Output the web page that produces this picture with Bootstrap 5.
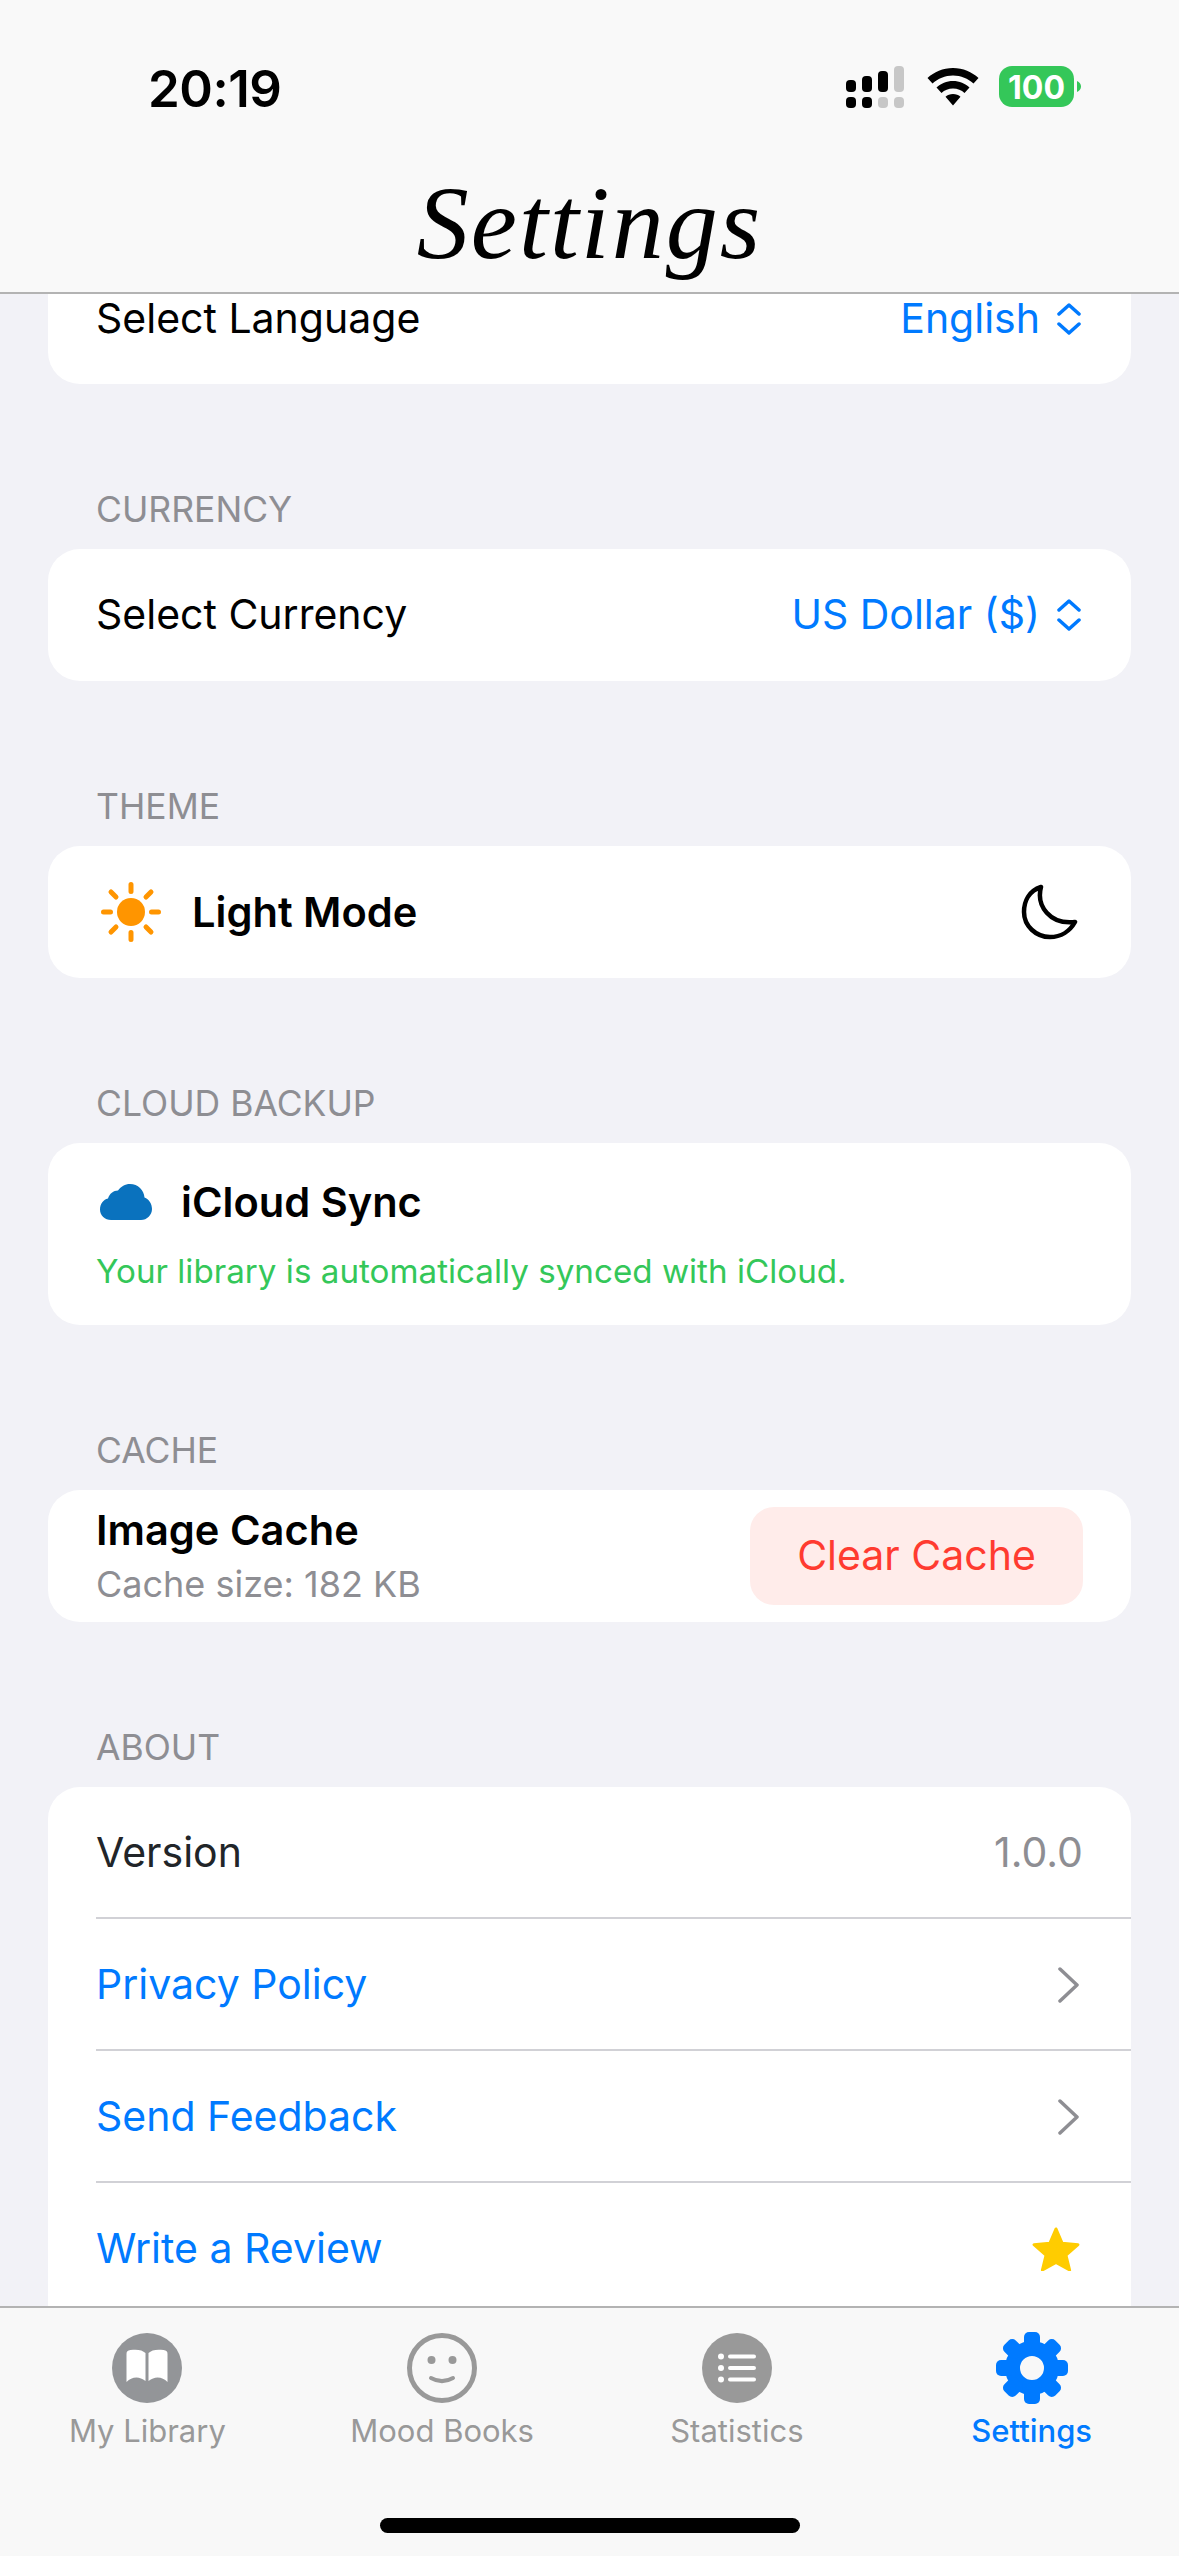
<!DOCTYPE html>
<html lang="en">
<head>
<meta charset="utf-8">
<title>Settings</title>
<link href="https://cdn.jsdelivr.net/npm/bootstrap@5.3.0/dist/css/bootstrap.min.css" rel="stylesheet">
<style>
html,body{height:100%;}
body{font-family:Inter,"Liberation Sans",sans-serif;background:#f2f2f7;color:#000;font-size:41px;overflow:hidden;}
.phone{height:2556px;}
.top-bar{height:294px;background:#f9f9f9;border-bottom:2px solid #b3b3b3;}
.status-row{height:174px;padding:0 98px 0 148px;}
.clock{font-size:51px;font-weight:600;line-height:1;padding-top:2px;letter-spacing:-.5px;}
.page-title{font-family:"Liberation Serif",serif;font-style:italic;font-size:104px;line-height:1;margin:-3px 0 0;letter-spacing:2px;}
.scroll-area{min-height:0;}
.scroll-inner{margin-top:-42px;padding:0 48px;}
.sheet{border-radius:32px;background:#fff;overflow:hidden;border:0;}
.sect-label{height:40px;line-height:40px;margin:105px 0 20px 48px;font-size:35.5px;color:#8e8e93;padding-top:1px;}
.line{height:132px;padding:0 48px;background:#fff;}
.first-line{line-height:1;padding-top:1px;}
.blue{color:#007aff;}
.muted-val{color:#8e8e93;}
.picker{gap:16px;}
.picker svg{margin-right:1px;}
.strong-txt{font-weight:600;font-size:41.6px;}
.theme-name{margin-left:31px;}
.sun{width:60px;height:60px;margin-left:5px;}
.moon{margin-right:5px;}
.cloud-box{height:182px;padding:28px 48px 0;}
.cloud-icon{margin-left:4px;}
.cloud-name{margin-left:29px;}
.sync-note{font-size:33.2px;color:#34c759;margin-top:18px;line-height:40px;}
.cache-name{line-height:48px;}
.cache-size{font-size:36px;color:#8e8e93;line-height:40px;margin:10px 0 3px;}
.clear-btn{width:333px;height:98px;background:#ffecea;color:#ff3b30;border:0;border-radius:24px;font-size:41px;padding:0;}
.clear-btn:hover{background:#ffecea;color:#ff3b30;}
.about-list .list-group-item{height:132px;padding:0 48px;border:0;background:transparent;}
.about-list .rule{position:relative;}
.about-list .rule::after{content:"";position:absolute;left:48px;right:0;top:-2px;height:2px;background:#d1d1d6;}
.about-list svg{margin-right:3px;}
.about-sheet{padding-bottom:100px;}
.tab-bar{height:250px;background:#f8f8f8;border-top:2px solid #b3b3b3;flex:0 0 250px;}
.tab-item{width:25%;padding-top:20px;color:#999;font-size:31px;line-height:40px;}
.tab-item svg{display:block;width:80px;height:80px;margin-bottom:3px;}
.tab-item.on{color:#007aff;font-weight:500;}
.home-bar{width:420px;height:15px;background:#000;border-radius:8px;margin:0 auto;}
.tab-row{height:210px;}
.wifi-icon{margin-left:21px;}
.batt{margin-left:20px;}
</style>
</head>
<body>
<div class="phone d-flex flex-column">
  <header class="top-bar flex-shrink-0">
    <div class="status-row d-flex align-items-center justify-content-between">
      <div class="clock">20:19</div>
      <div class="d-flex align-items-center">
        <svg width="60" height="42" viewBox="0 0 60 42"><g fill="#000"><rect x="0" y="14" width="10" height="12" rx="4"/><rect x="16" y="10" width="10" height="16" rx="4"/><rect x="32" y="5" width="10" height="21" rx="4"/><rect x="0" y="31" width="10" height="11" rx="4"/><rect x="16" y="31" width="10" height="11" rx="4"/></g><g fill="#c7c7c7"><rect x="48" y="0" width="10" height="26" rx="4"/><rect x="32" y="31" width="10" height="11" rx="4"/><rect x="48" y="31" width="10" height="11" rx="4"/></g></svg>
        <svg class="wifi-icon" width="52" height="38" viewBox="0 0 52 38"><path fill="#000" d="M26 0c10 0 19 4 25.500 10l-5 5.500C41 10.500 34 7.500 26 7.500S11 10.500 5.500 15.500L.5 10C7 4 16 0 26 0zM26 13c6.500 0 12 2.500 16.500 6.500l-5 5.500c-3-3-7-4.500-11.500-4.500s-8.500 1.500-11.500 4.500l-5-5.500C14 15.500 19.500 13 26 13zM26 26c3 0 5.500 1 7.500 2.800L26 37.500l-7.500-8.700C20.500 27 23 26 26 26z"/></svg>
        <svg class="batt" width="82" height="42" viewBox="0 0 82 42"><rect width="75" height="41" rx="13" fill="#34c759"/><path d="M78 15c2.500 1 4 3 4 5.500s-1.500 4.500-4 5.500z" fill="#34c759"/><text x="37.500" y="32.500" text-anchor="middle" font-family="Inter,sans-serif" font-weight="700" font-size="32" fill="#fff">100</text></svg>
      </div>
    </div>
    <h1 class="page-title text-center">Settings</h1>
  </header>

  <main class="scroll-area flex-grow-1 overflow-hidden">
    <div class="scroll-inner">
      <div class="sheet line first-line d-flex align-items-center justify-content-between">
        <span>Select Language</span>
        <span class="blue picker d-flex align-items-center">English
          <svg width="26" height="32" viewBox="0 0 26 32" fill="none" stroke="#007aff" stroke-width="3.500" stroke-linecap="round" stroke-linejoin="round"><path d="M3 11 13 2l10 9M3 21l10 9 10-9"/></svg></span>
      </div>

      <div class="sect-label">CURRENCY</div>
      <div class="sheet line d-flex align-items-center justify-content-between">
        <span>Select Currency</span>
        <span class="blue picker d-flex align-items-center">US Dollar ($)
          <svg width="26" height="32" viewBox="0 0 26 32" fill="none" stroke="#007aff" stroke-width="3.500" stroke-linecap="round" stroke-linejoin="round"><path d="M3 11 13 2l10 9M3 21l10 9 10-9"/></svg></span>
      </div>

      <div class="sect-label">THEME</div>
      <div class="sheet line d-flex align-items-center justify-content-between">
        <span class="d-flex align-items-center">
          <svg class="sun" viewBox="0 0 60 60"><circle cx="30" cy="30" r="14" fill="#ff9500"/><g stroke="#ff9500" stroke-width="5" stroke-linecap="round"><path d="M30 2.500v7M30 50.500v7M2.500 30h7M50.500 30h7M10 10l5 5M45 45l5 5M10 50l5-5M45 15l5-5"/></g></svg>
          <span class="strong-txt theme-name">Light Mode</span>
        </span>
        <svg class="moon" width="60" height="60" viewBox="0 0 60 60" fill="none" stroke="#000" stroke-width="4.500" stroke-linejoin="round"><path d="M23 5C11 9 6 19 6 30c0 14 12 25 26 25 11 0 20-6 25-15C32 43 18 24 23 5z"/></svg>
      </div>

      <div class="sect-label">CLOUD BACKUP</div>
      <div class="sheet cloud-box">
        <div class="d-flex align-items-center">
          <svg class="cloud-icon" width="52" height="36" viewBox="0 0 52 36"><path fill="#0a72be" d="M11 36C5 36 0 31.500 0 25.500 0 20 3.500 15.500 8 14.500 9.500 9.500 13.500 6.500 18 6.500 21 2.500 25 0 30 0 38 0 44 6 44.500 13.500 49 15 52 20 52 25 52 31 47 36 41 36z"/></svg>
          <span class="strong-txt cloud-name">iCloud Sync</span>
        </div>
        <div class="sync-note">Your library is automatically synced with iCloud.</div>
      </div>

      <div class="sect-label">CACHE</div>
      <div class="sheet line d-flex align-items-center justify-content-between">
        <div>
          <div class="strong-txt cache-name">Image Cache</div>
          <div class="cache-size">Cache size: 182 KB</div>
        </div>
        <button type="button" class="btn clear-btn">Clear Cache</button>
      </div>

      <div class="sect-label">ABOUT</div>
      <div class="sheet card about-sheet">
        <ul class="list-group list-group-flush about-list">
          <li class="list-group-item d-flex align-items-center justify-content-between"><span>Version</span><span class="muted-val">1.0.0</span></li>
          <li class="list-group-item rule d-flex align-items-center justify-content-between"><span class="blue">Privacy Policy</span>
            <svg width="24" height="36" viewBox="0 0 24 36" fill="none" stroke="#8e8e93" stroke-width="3.500" stroke-linecap="round" stroke-linejoin="round"><path d="M4 2l17 16L4 34"/></svg></li>
          <li class="list-group-item rule d-flex align-items-center justify-content-between"><span class="blue">Send Feedback</span>
            <svg width="24" height="36" viewBox="0 0 24 36" fill="none" stroke="#8e8e93" stroke-width="3.500" stroke-linecap="round" stroke-linejoin="round"><path d="M4 2l17 16L4 34"/></svg></li>
          <li class="list-group-item rule d-flex align-items-center justify-content-between"><span class="blue">Write a Review</span>
            <svg width="48" height="44" viewBox="0 0 50 46"><path fill="#ffcc00" stroke="#ffcc00" stroke-width="3" stroke-linejoin="round" d="M25 2l6.500 15 16.500 1.500-12.500 11 3.800 15.500L25 37l-14.300 8 3.800-15.500L2 18.500 18.500 17z"/></svg></li>
        </ul>
      </div>
    </div>
  </main>

  <footer class="tab-bar">
    <nav class="tab-row d-flex">
      <div class="tab-item d-flex flex-column align-items-center">
        <svg viewBox="0 0 80 80"><circle cx="40" cy="40" r="35" fill="#939598"/><path fill="#fff" d="M38.500 25c-3-3-8-4-15-3-3 .3-4 1.500-4 4v28c3-3 6-4.500 10-4.500 3 0 6 1.500 9 3.500zM41.500 25c3-3 8-4 15-3 3 .3 4 1.500 4 4v28c-3-3-6-4.500-10-4.500-3 0-6 1.500-9 3.500z"/></svg>
        My Library
      </div>
      <div class="tab-item d-flex flex-column align-items-center">
        <svg viewBox="0 0 80 80"><circle cx="40" cy="40" r="32.500" fill="none" stroke="#999" stroke-width="5"/><circle cx="29.500" cy="32" r="4" fill="#999"/><circle cx="50.500" cy="32" r="4" fill="#999"/><path d="M29 50c7 4 15 4 22 0" fill="none" stroke="#999" stroke-width="4" stroke-linecap="round"/></svg>
        Mood Books
      </div>
      <div class="tab-item d-flex flex-column align-items-center">
        <svg viewBox="0 0 80 80"><circle cx="40" cy="40" r="35" fill="#999"/><g fill="#fff"><circle cx="24" cy="28.500" r="3"/><circle cx="24" cy="40" r="3"/><circle cx="24" cy="51.500" r="3"/></g><g stroke="#fff" stroke-width="4" stroke-linecap="round"><path d="M33 28.500h24M33 40h24M33 51.500h24"/></g></svg>
        Statistics
      </div>
      <div class="tab-item on d-flex flex-column align-items-center">
        <svg viewBox="0 0 80 80"><g fill="#007aff"><circle cx="40" cy="40" r="19.500" fill="none" stroke="#007aff" stroke-width="15"/><g id="t"><rect x="32" y="4" width="16" height="18" rx="5"/></g><use href="#t" transform="rotate(45 40 40)"/><use href="#t" transform="rotate(90 40 40)"/><use href="#t" transform="rotate(135 40 40)"/><use href="#t" transform="rotate(180 40 40)"/><use href="#t" transform="rotate(225 40 40)"/><use href="#t" transform="rotate(270 40 40)"/><use href="#t" transform="rotate(315 40 40)"/></g></svg>
        Settings
      </div>
    </nav>
    <div class="home-bar"></div>
  </footer>
</div>
<script src="https://cdn.jsdelivr.net/npm/bootstrap@5.3.0/dist/js/bootstrap.bundle.min.js"></script>
</body>
</html>
